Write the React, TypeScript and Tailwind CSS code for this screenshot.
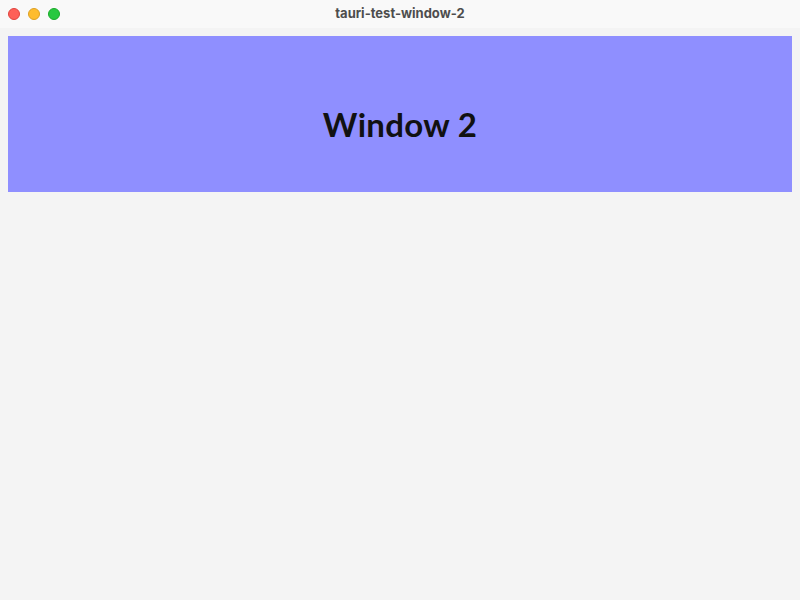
import React from 'react';

function TitleBar() {
  return (
    <div className="relative flex h-[28px] items-center bg-[#f9f9f9] px-2">
      <div className="flex items-center gap-2">
        <span className="h-3 w-3 rounded-full bg-[#fe5f57] border border-[#e0443e]" />
        <span className="h-3 w-3 rounded-full bg-[#febc2e] border border-[#dea123]" />
        <span className="h-3 w-3 rounded-full bg-[#28c840] border border-[#1aab29]" />
      </div>
      <div className="absolute inset-0 flex items-center justify-center text-[13px] font-bold text-[#4d4d4d] font-['Inter',sans-serif]">
        tauri-test-window-2
      </div>
    </div>
  );
}

export default function App() {
  return (
    <div className="flex h-[600px] w-[800px] flex-col bg-[#f4f4f4]">
      <TitleBar />
      <div className="p-2">
        <div className="flex h-[156px] items-center justify-center bg-[#8f8fff] pt-[22px]">
          <h1 className="text-[33px] font-bold text-[#111111] font-['Lato',sans-serif] tracking-[0.3px]">Window 2</h1>
        </div>
      </div>
    </div>
  );
}
